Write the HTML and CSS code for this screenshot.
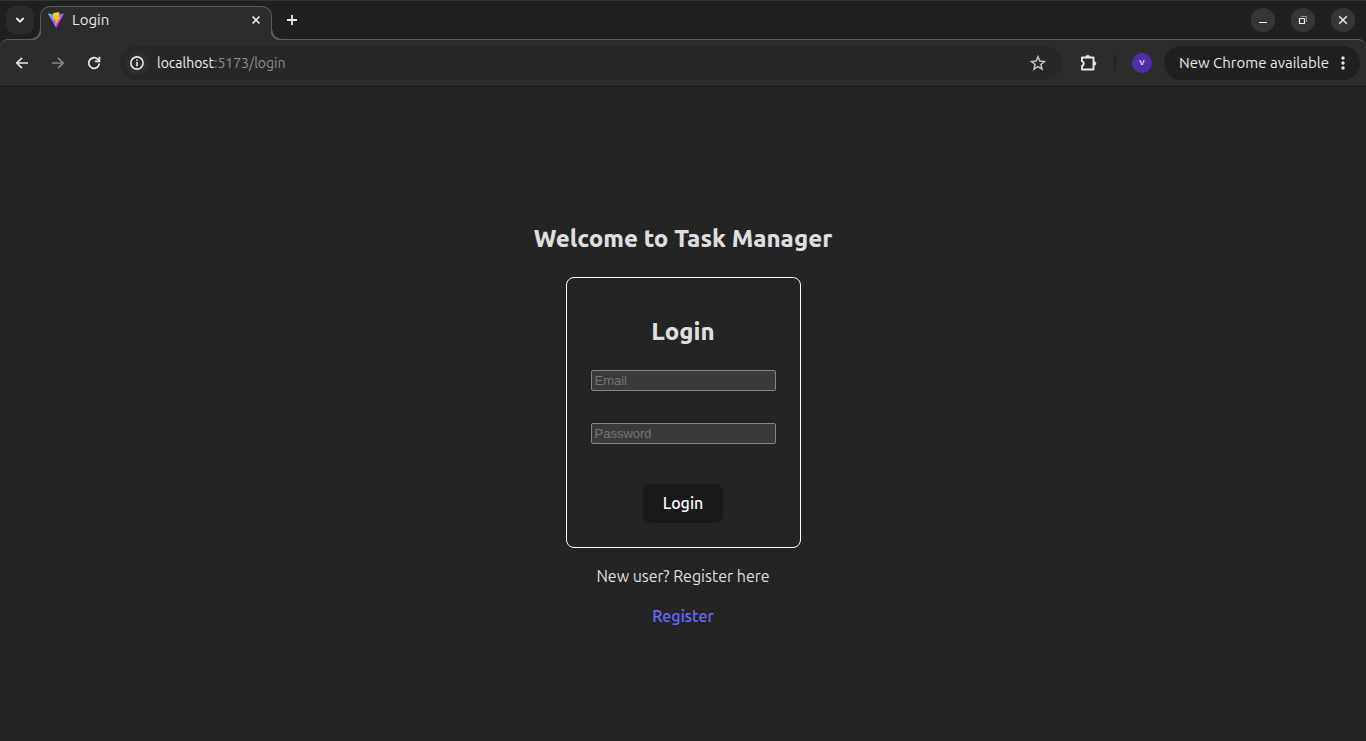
FILE: index.html
```html
<!DOCTYPE html>
<html lang="en">
<head>
<meta charset="utf-8">
<title>Login</title>
<link rel="stylesheet" href="styles.css">
</head>
<body>
<header class="browser">
  <div class="tabstrip">
    <button class="tab-search" aria-label="Search tabs"><svg width="10" height="10" viewBox="0 0 10 10"><path d="M1.3 3l3.7 3.7L8.700 3" fill="none" stroke="currentColor" stroke-width="1.9"/></svg></button>
    <div class="tab">
      <svg width="16" height="16" viewBox="0 0 32 32" aria-hidden="true">
        <defs>
          <linearGradient id="shield" x1="0" y1="0" x2="0.6" y2="1"><stop offset="0" stop-color="#41d1ff"/><stop offset="0.55" stop-color="#a855fe"/><stop offset="1" stop-color="#bd34fe"/></linearGradient>
          <linearGradient id="bolt" x1="0.4" y1="0" x2="0.6" y2="1"><stop offset="0" stop-color="#ffd52b"/><stop offset="1" stop-color="#ffa800"/></linearGradient>
        </defs>
        <path d="M31.500 4.500L17 31q-.8 1.200-1.600 0L.5 4.500Q0 3 1.500 3.200L16 5.800l14.300-2.600Q32 3 31.500 4.500z" fill="url(#shield)"/>
        <path d="M23 0L10.500 2.100l-.8 12.600 4.300-.7-.9 4.600 2.300-.5-1.300 7.200 1.400.2L25.200 9.300l-3.800.7L23 0z" fill="url(#bolt)"/>
      </svg>
      <span class="tab-title">Login</span>
      <button class="icon-button tab-close" aria-label="Close tab"><svg width="10" height="10" viewBox="0 0 10 10"><path d="M1.500 1.500l7 7M8.500 1.500l-7 7" stroke="currentColor" stroke-width="1.600"/></svg></button>
    </div>
    <button class="icon-button new-tab" aria-label="New tab"><svg width="12" height="12" viewBox="0 0 12 12"><path d="M6 1v10M1 6h10" stroke="currentColor" stroke-width="1.800"/></svg></button>
    <div class="window-controls">
      <button class="window-button" aria-label="Minimize"><svg width="12" height="12" viewBox="0 0 12 12"><path d="M2 8.500h8" stroke="currentColor"/></svg></button>
      <button class="window-button" aria-label="Restore"><svg width="12" height="12" viewBox="0 0 12 12" fill="none" stroke="currentColor"><path d="M4 2.500h5.500V8" stroke="#929292"/><path d="M2.500 4.500h5v5h-5z" stroke-width="1.200"/></svg></button>
      <button class="window-button" aria-label="Close window"><svg width="12" height="12" viewBox="0 0 12 12"><path d="M2.200 2.200l7.600 7.600M9.800 2.200L2.200 9.800" stroke="currentColor" stroke-width="1.500"/></svg></button>
    </div>
  </div>
  <div class="toolbar">
    <nav class="nav">
      <button class="icon-button" aria-label="Back"><svg width="16" height="16" viewBox="0 0 16 16" fill="none" stroke="currentColor" stroke-width="1.700"><path d="M14 8H3M8 2.800L2.800 8 8 13.200"/></svg></button>
      <button class="icon-button muted" aria-label="Forward" disabled><svg width="16" height="16" viewBox="0 0 16 16" fill="none" stroke="currentColor" stroke-width="1.700"><path d="M2 8h11M8 2.800L13.200 8 8 13.200"/></svg></button>
      <button class="icon-button" aria-label="Reload"><svg width="16" height="16" viewBox="0 0 16 16" fill="none" stroke="currentColor" stroke-width="1.800"><path d="M13.300 8.500A5.300 5.300 0 1 1 11.800 4.300L13 5.600"/><path d="M13.400 1.800v4.600H8.800" /></svg></button>
    </nav>
    <div class="address">
      <button class="icon-button site-info" aria-label="Site information"><svg width="16" height="16" viewBox="0 0 16 16"><circle cx="8" cy="8" r="6.100" fill="none" stroke="currentColor" stroke-width="1.600"/><path d="M8 7v4.200M8 4.500v1.600" stroke="currentColor" stroke-width="1.600"/></svg></button>
      <span class="url">localhost<span class="url-path">:5173/login</span></span>
      <button class="icon-button bookmark" aria-label="Bookmark"><svg width="18" height="18" viewBox="0 0 18 18"><path d="M9 2.800l1.800 4.300 4.600.4-3.500 3 1.100 4.600L9 12.700l-4 2.400 1.100-4.600-3.500-3 4.600-.4z" fill="none" stroke="currentColor" stroke-width="1.500"/></svg></button>
    </div>
    <button class="icon-button extensions" aria-label="Extensions"><svg width="20" height="20" viewBox="0 0 20 20"><path d="M3 4.500h11.500v12H3v-3.700a2.400 2.400 0 0 0 0-4.600z" fill="none" stroke="currentColor" stroke-width="1.900" stroke-linejoin="round"/><path d="M7 4a1.800 1.800 0 0 1 3.600 0zM15 8.500a1.900 1.900 0 0 1 0 3.800z" fill="currentColor" stroke="currentColor" stroke-width=".6"/></svg></button>
    <span class="divider"></span>
    <button class="avatar" aria-label="Profile V">V</button>
    <button class="update">New Chrome available<svg width="4" height="16" viewBox="0 0 4 16" fill="currentColor"><circle cx="2" cy="3" r="1.700"/><circle cx="2" cy="8" r="1.700"/><circle cx="2" cy="13" r="1.700"/></svg></button>
  </div>
</header>
<main class="page">
  <h1 class="heading welcome">Welcome to Task Manager</h1>
  <form class="card">
    <h2 class="heading card-title">Login</h2>
    <input class="field" type="email" placeholder="Email" aria-label="Email">
    <input class="field" type="password" placeholder="Password" aria-label="Password">
    <button class="submit" type="button">Login</button>
  </form>
  <p class="hint">New user? Register here</p>
  <a class="register" href="#">Register</a>
</main>
</body>
</html>
```
FILE: styles.css
```css
* { box-sizing: border-box; }

body {
  display: flex;
  flex-direction: column;
  min-height: 100vh;
  margin: 0;
  background: #242424;
  color: #dedede;
  font-family: Ubuntu, "Noto Sans", sans-serif;
  font-size: 16px;
  line-height: 24px;
}

button { border: 0; padding: 0; font: inherit; color: inherit; }

svg { display: block; flex: none; }

.browser { color: #e8e8e8; font-size: 15px; background: #202020; }

.tabstrip {
  display: flex;
  align-items: center;
  height: 39px;
  padding: 0 11px 0 6px;
  border-top: 1px solid #333;
}

.tab-search {
  display: grid;
  place-items: center;
  width: 28px;
  height: 28px;
  border-radius: 9px;
  background: #2b2b2b;
}

.tab {
  position: relative;
  display: flex;
  align-items: center;
  align-self: flex-end;
  gap: 8px;
  width: 232px;
  height: 34px;
  margin: 0 0 -1px 6px;
  padding: 0 7px 8px;
  border: 1px solid #5a5a5a;
  border-bottom: 0;
  border-radius: 10px 10px 0 0;
  background: #2c2c2c;
}

/* Curved feet that join the active tab to the toolbar */
.tab::before,
.tab::after {
  content: "";
  position: absolute;
  bottom: 0;
  width: 10px;
  height: 10px;
}

.tab::before {
  right: 100%;
  background: radial-gradient(circle at 0 0, #202020 8px, #5a5a5a 9px, #5a5a5a 10px, #2c2c2c 11px);
}

.tab::after {
  left: 100%;
  background: radial-gradient(circle at 100% 0, #202020 8px, #5a5a5a 9px, #5a5a5a 10px, #2c2c2c 11px);
}

.tab-title { flex: 1; }

.icon-button {
  display: grid;
  place-items: center;
  flex: none;
  width: 20px;
  height: 20px;
  background: none;
}

.tab-close { width: 16px; }

.new-tab { margin-left: 10px; }

.window-controls { display: flex; gap: 16px; margin-left: auto; }

.window-button {
  display: grid;
  place-items: center;
  width: 24px;
  height: 24px;
  border-radius: 50%;
  background: #363636;
}

.toolbar {
  display: flex;
  align-items: center;
  height: 48px;
  padding: 0 6px 0 12px;
  border-top: 1px solid #5a5a5a;
  border-bottom: 1px solid #171717;
  border-radius: 8px 8px 0 0;
  background: #2c2c2c;
}

.nav { display: flex; gap: 16px; }

.muted { color: #858585; }

.address {
  display: flex;
  flex: 1;
  align-items: center;
  height: 34px;
  margin: 0 17px 0 16px;
  padding: 0 14px 0 5px;
  border-radius: 17px;
  background: #272727;
}

.site-info {
  width: 24px;
  height: 24px;
  border-radius: 50%;
  background: #2d2d2d;
}

.url { flex: 1; padding-left: 8px; color: #f0f0f0; font-size: 14px; }

.url-path { color: #8e8e8e; }

.bookmark { color: #c4c4c4; }

.divider { width: 2px; height: 16px; margin: 0 16px 0 15px; background: #222; }

.avatar {
  width: 20px;
  height: 20px;
  border-radius: 50%;
  background: #512da8;
  color: #fff;
  font-size: 8px;
  font-weight: 500;
  line-height: 20px;
}

.update {
  display: flex;
  align-items: center;
  justify-content: space-between;
  gap: 8px;
  width: 196px;
  height: 34px;
  margin-left: 12px;
  padding: 0 15px;
  border-radius: 17px;
  background: #202020;
  white-space: nowrap;
}

.page {
  display: flex;
  flex: 1;
  flex-direction: column;
  align-items: center;
  justify-content: center;
}

.heading { margin: 0; font-size: 24px; font-weight: 800; line-height: 36px; }

.welcome { margin: 20px 0; }

.card {
  display: flex;
  flex-direction: column;
  align-items: center;
  padding: 36px 24px 24px;
  border: 1px solid #fff;
  border-radius: 8px;
}

.card-title { margin-bottom: 20px; }

.field {
  width: 185px;
  height: 21px;
  margin-bottom: 32px;
  padding: 1px 3px;
  border: 1px solid #858585;
  border-radius: 2px;
  background: #3b3b3b;
  color: #fff;
  font: 13px "Liberation Sans", Arial, sans-serif;
}

.field::placeholder { color: #757575; }

.submit {
  height: 39px;
  margin-top: 8px;
  padding: 0 20px;
  border-radius: 8px;
  background: #1a1a1a;
  color: #fff;
  font-weight: 550;
}

.hint { margin: 16px 0; }

.register { color: #646cff; font-weight: 550; text-decoration: none; }
```
